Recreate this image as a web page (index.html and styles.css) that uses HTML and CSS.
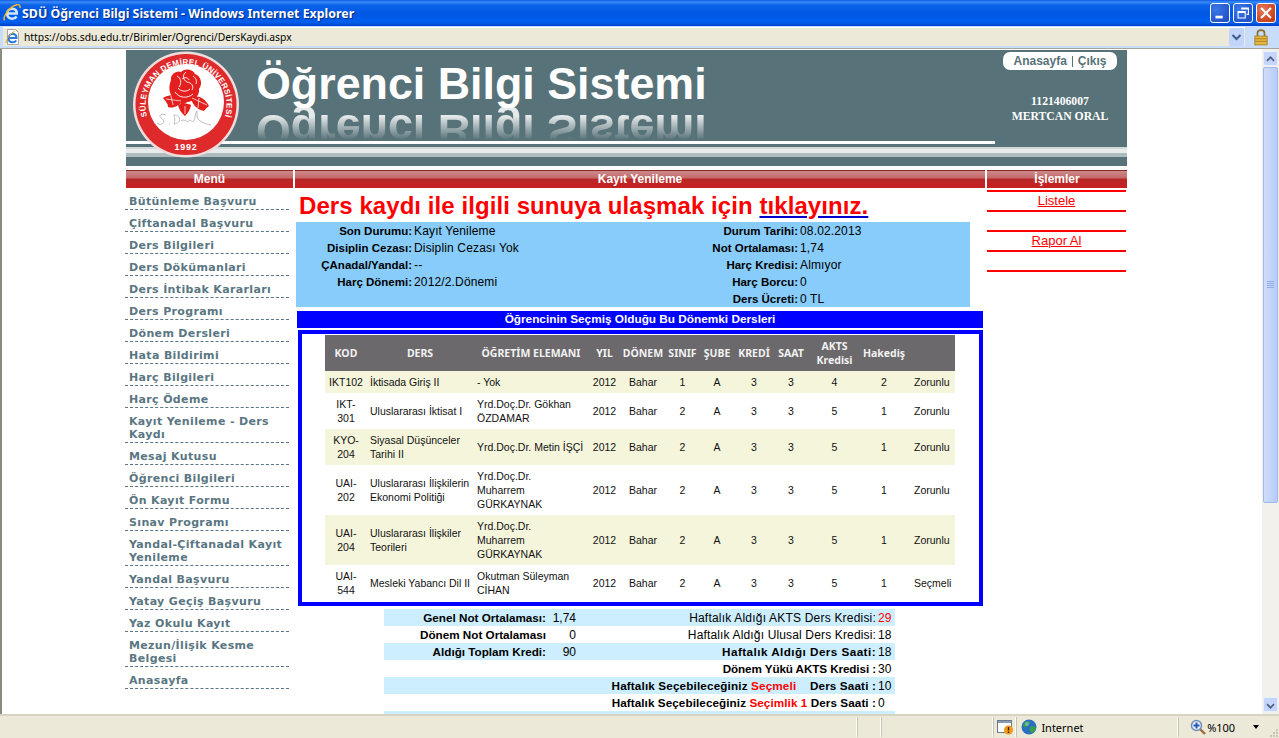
FILE: index.html
```html
<!DOCTYPE html>
<html lang="tr">
<head>
<meta charset="utf-8">
<title>SDÜ Öğrenci Bilgi Sistemi</title>
<link rel="stylesheet" href="styles.css">
</head>
<body>
<div class="window">
  <header class="titlebar">
    <svg class="ie-big" viewBox="0 0 18 18" width="18" height="18"><path d="M4.500 9.500h9.300c.2-3-1.800-4.800-4.500-4.800-3 0-5.200 2.200-5.200 5s2.200 5 5.200 5c2 0 3.400-.8 4.300-2.200" fill="none" stroke="#cfe6ff" stroke-width="2.600"/><path d="M1.500 16.500C-.5 13 6 3 13 1c3-1 4.500 0 4 3" fill="none" stroke="#f0b428" stroke-width="1.500"/></svg>
    <span class="title-text">SDÜ Öğrenci Bilgi Sistemi - Windows Internet Explorer</span>
    <span class="win-btns">
      <span class="win-btn"><svg viewBox="0 0 20 20" width="18" height="18"><rect x="5" y="13" width="8" height="3" fill="#fff"/></svg></span>
      <span class="win-btn"><svg viewBox="0 0 20 20" width="18" height="18"><path d="M8 4.500h8v7h-2M4.500 8.500h8v7h-8z M4.500 9.500h8M8 5.500h8" fill="none" stroke="#fff" stroke-width="1.200"/></svg></span>
      <span class="win-btn win-close"><svg viewBox="0 0 20 20" width="18" height="18"><path d="M4.500 4.500l11 11M15.500 4.500l-11 11" stroke="#fff" stroke-width="2.400"/></svg></span>
    </span>
  </header>

  <div class="addressbar">
    <div class="address-field">
      <svg class="page-icon" viewBox="0 0 16 16" width="16" height="16"><path d="M2.500 .5h8l3 3v12h-11z" fill="#fff" stroke="#a8a8a8"/><path d="M3.500 9h8c0-2.500-1.500-4-3.800-4C5.200 5 3.500 7 3.500 9.300s1.700 4 4.200 4c1.600 0 2.800-.6 3.500-1.800" fill="none" stroke="#2a7ad8" stroke-width="2"/><path d="M1 14C1 11 5 4 10 2.500" fill="none" stroke="#e8a820"/></svg>
      <span class="url">https://obs.sdu.edu.tr/Birimler/Ogrenci/DersKaydi.aspx</span>
      <span class="url-drop"><svg viewBox="0 0 15 18" width="15" height="18"><path d="M3.500 7l4 4 4-4" fill="none" stroke="#3c5a8c" stroke-width="2"/></svg></span>
    </div>
    <div class="lock">
      <svg viewBox="0 0 16 20" width="14" height="18"><path d="M4 9V5.500C4 1 12 1 12 5.500V9" fill="none" stroke="#8c7026" stroke-width="2"/><rect x="1" y="9" width="14" height="10" fill="#e8b63c" stroke="#a07e20"/><path d="M1 12h14M1 15h14" stroke="#a07e20"/></svg>
    </div>
  </div>

  <div class="viewport">
    <main class="page">
      <section class="banner">
        <svg class="logo" viewBox="0 0 108 110" width="108" height="110">
          <circle cx="53" cy="54.500" r="53" fill="#f0dcdc"/>
          <circle cx="53" cy="54.500" r="50.500" fill="#df2a2c"/>
          <circle cx="53" cy="52" r="38" fill="#fff"/>
          <defs><path id="arc-top" d="M14 66A40.500 40.500 0 1 1 92 66"/></defs>
          <text class="logo-ring"><textPath href="#arc-top" startOffset="50%" text-anchor="middle" textLength="150" lengthAdjust="spacing">SÜLEYMAN DEMİREL ÜNİVERSİTESİ</textPath></text>
          <text class="logo-year" x="53" y="100" text-anchor="middle">1992</text>
          <path d="M38 30C37 24 44 20 48 22 52 18 60 19 62 24 68 26 70 34 66 39 67 46 60 52 54 52 50 56 46 54 44 50 38 48 34 40 38 30Z" fill="#e3201e"/>
          <path d="M44 26c4 2 5 7 2 11M53 22c-4 3-3 8 1 10 5 1 7 4 5 8M49 29c2-2 6-2 7 1M45 38c3 4 9 4 12 1M42 42c4 6 12 7 18 2M60 26c3 2 4 5 3 8" fill="none" stroke="#fff" stroke-width=".9"/>
          <path d="M30 48C36 44 44 44 50 50 46 56 40 59 35 57 35 53 32 51 30 48ZM76 56C72 48 66 45 58 47 58 53 64 60 71 61 72 59 74 58 76 56ZM45 55C49 53 54 53 58 55 57 60 55 63 52 66 48 63 46 59 45 55Z" fill="#e3201e"/>
          <path d="M33 49l15 2M74 55l-15-7M52 56v8M38 46l2 9M66 48l-1 10" stroke="#fff" stroke-width=".7"/>
          <path d="M33 65c-4-2-8 0-5 3 3 2 4 4 1 6-2 1-4 0-5-1M36 74h1M41 65c1 4 1 7 0 9M41 65c7 0 8 8 0 9M48 71c3-3 5 2 8 0 2-2 3 2 5 0 1-3 1-7 3-10 0 5 0 8 2 9 2 2 7 4 12 5" fill="none" stroke="#aeaeae" stroke-width=".8"/>
        </svg>
        <div class="banner-top">
          <h1 class="brand">Öğrenci Bilgi Sistemi</h1>
          <div class="brand-mirror" aria-hidden="true">Öğrenci Bilgi Sistemi</div>
          <div class="account">
            <nav class="top-links"><a>Anasayfa</a><i></i><a>Çıkış</a></nav>
            <p class="student">1121406007<br>MERTCAN ORAL</p>
          </div>
        </div>
        <div class="rule"></div>
        <div class="stripes"></div>
      </section>

      <div class="columns">
        <aside class="col">
          <h2 class="bar">Menü</h2>
          <nav class="menu">
            <a>Bütünleme Başvuru</a>
            <a>Çiftanadal Başvuru</a>
            <a>Ders Bilgileri</a>
            <a>Ders Dökümanlari</a>
            <a>Ders İntibak Kararları</a>
            <a>Ders Programı</a>
            <a>Dönem Dersleri</a>
            <a>Hata Bildirimi</a>
            <a>Harç Bilgileri</a>
            <a>Harç Ödeme</a>
            <a>Kayıt Yenileme - Ders Kaydı</a>
            <a>Mesaj Kutusu</a>
            <a>Öğrenci Bilgileri</a>
            <a>Ön Kayıt Formu</a>
            <a>Sınav Programı</a>
            <a>Yandal-Çiftanadal Kayıt Yenileme</a>
            <a>Yandal Başvuru</a>
            <a>Yatay Geçiş Başvuru</a>
            <a>Yaz Okulu Kayıt</a>
            <a>Mezun/İlişik Kesme Belgesi</a>
            <a>Anasayfa</a>
          </nav>
        </aside>

        <div class="col">
          <h2 class="bar">Kayıt Yenileme</h2>
          <p class="notice">Ders kaydı ile ilgili sunuya ulaşmak için <a>tıklayınız.</a></p>
          <div class="info">
            <b>Son Durumu:</b><span>Kayıt Yenileme</span><b>Durum Tarihi:</b><span>08.02.2013</span>
            <b>Disiplin Cezası:</b><span>Disiplin Cezası Yok</span><b>Not Ortalaması:</b><span>1,74</span>
            <b>ÇAnadal/Yandal:</b><span>--</span><b>Harç Kredisi:</b><span>Almıyor</span>
            <b>Harç Dönemi:</b><span>2012/2.Dönemi</span><b>Harç Borcu:</b><span>0</span>
            <b></b><span></span><b>Ders Ücreti:</b><span>0 TL</span>
          </div>
          <h3 class="blue-title">Öğrencinin Seçmiş Olduğu Bu Dönemki Dersleri</h3>
          <div class="courses-box">
            <table class="courses">
              <colgroup>
                <col class="c-kod"><col class="c-ders"><col class="c-ogr"><col class="c-yil"><col class="c-don"><col class="c-sin"><col class="c-sub"><col class="c-kre"><col class="c-saa"><col class="c-akt"><col class="c-hak"><col class="c-tur">
              </colgroup>
              <thead>
                <tr><th>KOD</th><th>DERS</th><th>ÖĞRETİM ELEMANI</th><th>YIL</th><th>DÖNEM</th><th>SINIF</th><th>ŞUBE</th><th>KREDİ</th><th>SAAT</th><th>AKTS Kredisi</th><th>Hakediş</th><th></th></tr>
              </thead>
              <tbody>
                <tr class="alt"><td>IKT102</td><td class="l">İktisada Giriş II</td><td class="l">- Yok</td><td>2012</td><td>Bahar</td><td>1</td><td>A</td><td>3</td><td>3</td><td>4</td><td>2</td><td class="l">Zorunlu</td></tr>
                <tr><td>IKT-301</td><td class="l">Uluslararası İktisat I</td><td class="l">Yrd.Doç.Dr. Gökhan ÖZDAMAR</td><td>2012</td><td>Bahar</td><td>2</td><td>A</td><td>3</td><td>3</td><td>5</td><td>1</td><td class="l">Zorunlu</td></tr>
                <tr class="alt"><td>KYO-204</td><td class="l">Siyasal Düşünceler Tarihi II</td><td class="l">Yrd.Doç.Dr. Metin İŞÇİ</td><td>2012</td><td>Bahar</td><td>2</td><td>A</td><td>3</td><td>3</td><td>5</td><td>1</td><td class="l">Zorunlu</td></tr>
                <tr><td>UAI-202</td><td class="l">Uluslararası İlişkilerin Ekonomi Politiği</td><td class="l">Yrd.Doç.Dr.<br>Muharrem<br>GÜRKAYNAK</td><td>2012</td><td>Bahar</td><td>2</td><td>A</td><td>3</td><td>3</td><td>5</td><td>1</td><td class="l">Zorunlu</td></tr>
                <tr class="alt"><td>UAI-204</td><td class="l">Uluslararası İlişkiler Teorileri</td><td class="l">Yrd.Doç.Dr.<br>Muharrem<br>GÜRKAYNAK</td><td>2012</td><td>Bahar</td><td>2</td><td>A</td><td>3</td><td>3</td><td>5</td><td>1</td><td class="l">Zorunlu</td></tr>
                <tr><td>UAI-544</td><td class="l">Mesleki Yabancı Dil II</td><td class="l">Okutman Süleyman CİHAN</td><td>2012</td><td>Bahar</td><td>2</td><td>A</td><td>3</td><td>3</td><td>5</td><td>1</td><td class="l">Seçmeli</td></tr>
              </tbody>
            </table>
          </div>
          <div class="summary">
            <div class="sum-row tint"><b>Genel Not Ortalaması:</b><span class="num">1,74</span><span class="lab sp-a">Haftalık Aldığı AKTS Ders Kredisi:</span><span class="val red">29</span></div>
            <div class="sum-row"><b>Dönem Not Ortalaması</b><span class="num">0</span><span class="lab sp-b">Haftalık Aldığı Ulusal Ders Kredisi:</span><span class="val">18</span></div>
            <div class="sum-row tint"><b>Aldığı Toplam Kredi:</b><span class="num">90</span><b class="lab sp-c">Haftalık Aldığı Ders Saati:</b><span class="val">18</span></div>
            <div class="sum-row"><b></b><span class="num"></span><b class="lab sp-d">Dönem Yükü AKTS Kredisi :</b><span class="val">30</span></div>
            <div class="sum-row tint"><b></b><span class="num"></span><b class="lab sp-f">Haftalık Seçebileceğiniz <em>Seçmeli</em>&nbsp;&nbsp;&nbsp; Ders Saati :</b><span class="val">10</span></div>
            <div class="sum-row"><b></b><span class="num"></span><b class="lab sp-e">Haftalık Seçebileceğiniz <em>Seçimlik 1</em> Ders Saati :</b><span class="val">0</span></div>
            <div class="sum-row tint"><b></b><span class="num"></span><b class="lab"></b><span class="val"></span></div>
          </div>
        </div>

        <aside class="col">
          <h2 class="bar">İşlemler</h2>
          <div class="actions">
            <a>Listele</a>
            <span></span>
            <a>Rapor Al</a>
            <span></span>
          </div>
        </aside>
      </div>
    </main>

    <div class="scrollbar">
      <span class="sb-btn"><svg viewBox="0 0 15 15" width="15" height="15"><path d="M3.500 9l4-4 4 4" fill="none" stroke="#4d6185" stroke-width="2"/></svg></span>
      <span class="sb-thumb"><svg viewBox="0 0 7 8" width="7" height="8"><path d="M0 .5h7M0 2.500h7M0 4.500h7M0 6.500h7" stroke="#8fb0e8"/></svg></span>
      <span class="sb-track"></span>
      <span class="sb-btn"><svg viewBox="0 0 15 15" width="15" height="15"><path d="M3.500 6l4 4 4-4" fill="none" stroke="#4d6185" stroke-width="2"/></svg></span>
    </div>
  </div>

  <footer class="statusbar">
    <span class="st st-wide"></span>
    <span class="st st-a"></span>
    <span class="st st-b"></span>
    <span class="st st-warn"><svg viewBox="0 0 17 16" width="17" height="16"><rect x=".5" y="1.500" width="14" height="12" fill="#fff" stroke="#6a7a90"/><path d="M1 3h13" stroke="#8a9ab0" stroke-width="2"/><circle cx="11.500" cy="11" r="4.500" fill="#f09a1c"/><path d="M11.500 8v3.500M11.500 12.500v1.500" stroke="#402000" stroke-width="1.400"/></svg></span>
    <span class="st st-zone"><svg viewBox="0 0 16 16" width="16" height="16"><circle cx="8" cy="8" r="7.500" fill="#2a6fc0"/><path d="M3 4c2-2 5-2 6-1 0 2-2 2-3 4-1 2-3 1-4 0zM9 8c2-1 5-1 6 1-1 3-3 5-5 5-1-2-2-4-1-6z" fill="#38a048"/><circle cx="6" cy="5" r="2" fill="#a8d0f0" opacity=".5"/></svg>Internet</span>
    <span class="st st-zoom"><svg viewBox="0 0 16 16" width="16" height="16"><path d="M10 10l5 5" stroke="#a06a3c" stroke-width="2.400"/><circle cx="6.500" cy="6.500" r="5" fill="#e8f0fa" stroke="#6f8db5" stroke-width="1.500"/><path d="M6.500 3.500v6M3.500 6.500h6" stroke="#2858b8" stroke-width="2"/></svg>%100<i class="zoom-arrow"></i></span>
    <span class="grip"><svg viewBox="0 0 11 11" width="11" height="11"><path d="M8 2h2v2H8zM5 5h2v2H5zM8 5h2v2H8zM2 8h2v2H2zM5 8h2v2H5zM8 8h2v2H8z" fill="#c8c4b0"/></svg></span>
  </footer>
</div>
</body>
</html>
```
FILE: styles.css
```css
* { box-sizing: border-box; }
html, body { margin: 0; padding: 0; height: 100%; overflow: hidden; }
body { font-family: "Liberation Sans", Arial, sans-serif; font-size: 12px; color: #000; background: #fff; }
h1, h2, h3, p { margin: 0; }

.window { width: 1279px; height: 738px; display: flex; flex-direction: column; }

/* title bar */
.titlebar {
  height: 26px; flex: none; display: flex; align-items: center; padding-left: 3px;
  background: linear-gradient(#0a5ae0 0, #3c8cf8 2px, #0a62e8 5px, #0057e4 14px, #0060ee 22px, #0040c8 26px);
}
.ie-big { flex: none; }
.title-text {
  margin-left: 1px; color: #fff; font: bold 12.400px "Noto Sans", sans-serif; text-shadow: 1px 1px 1px #0a2a80;
  white-space: nowrap;
}
.win-btns { margin-left: auto; display: flex; gap: 3px; padding-right: 3px; }
.win-btn {
  width: 20px; height: 20px; border: 1px solid #fff; border-radius: 3px; display: flex; align-items: center; justify-content: center;
  background: radial-gradient(circle at 30% 30%, #3a78e8, #2452c8 80%);
}
.win-close { background: radial-gradient(circle at 30% 30%, #e87858, #c83c18 80%); }

/* address bar */
.addressbar {
  height: 23px; flex: none; display: flex; padding: 1px 3px 2px 3px;
  background: #c8dcfc; border-bottom: 1px solid #a8a498;
}
.address-field {
  flex: 1; display: flex; align-items: center; background: #ece9d8; border-top: 1px solid #fff; padding-left: 2px; min-width: 0;
}
.page-icon { flex: none; }
.url { margin-left: 3px; font: 10.300px "Noto Sans", sans-serif; color: #000; }
.url-drop {
  margin-left: auto; margin-right: 1px; width: 15px; height: 18px; background: #c2d4f8; border-radius: 2px; display: flex; align-items: center;
}
.lock { width: 31px; flex: none; display: flex; align-items: center; justify-content: center; }

/* viewport */
.viewport { flex: 1; min-height: 0; display: flex; border-left: 2px solid #8a8a80; overflow: hidden; }
.page { flex: 1; min-width: 0; overflow: hidden; padding: 1px 0 0 124px; background: #fff; }

/* banner */
.banner { position: relative; width: 1001px; height: 116px; background: #577278; display: flex; flex-direction: column; }
.logo { position: absolute; left: 7px; top: 0; z-index: 2; }
.logo-ring { font: bold 8px "Liberation Sans", sans-serif; fill: #fff; }
.logo-year { font: bold 9px "Liberation Sans", sans-serif; fill: #fff; letter-spacing: .8px; }
.banner-top { position: relative; height: 91px; flex: none; display: flex; justify-content: space-between; padding-left: 130px; }
.brand { color: #fff; font: bold 44.800px/40px "Liberation Sans", sans-serif; padding-top: 13px; white-space: nowrap; }
.brand-mirror {
  position: absolute; left: 130px; top: 55px; height: 46px; padding-bottom: 6px; color: #fff; font: bold 44.800px/40px "Liberation Sans", sans-serif; white-space: nowrap;
  transform: scaleY(-1);
  -webkit-mask-image: linear-gradient(to top, rgba(0,0,0,.85) 11px, rgba(0,0,0,0) 35px);
  mask-image: linear-gradient(to top, rgba(0,0,0,.85) 11px, rgba(0,0,0,0) 35px);
}
.account { width: 131px; padding: 2px 3px 0 0; display: flex; flex-direction: column; align-items: center; flex: none; }
.top-links {
  width: 114px; height: 18px; background: #fff; border-radius: 7px; display: flex; align-items: center; justify-content: center;
  color: #577278; font: bold 12px "Liberation Sans", sans-serif;
}
.top-links i { width: 1px; height: 11px; background: #577278; margin: 0 5px; }
.student { margin-top: 24px; color: #fff; font: bold 11.700px/15px "Liberation Serif", serif; text-align: center; }
.rule { height: 3px; width: 869px; background: #fff; flex: none; }
.stripes { margin-top: 3px; height: 10px; flex: none; background: linear-gradient(#d0d8d8 0, #d0d8d8 2px, #e8ecec 2px, #e8ecec 6px, #aebcbe 6px); }

/* columns */
.columns { display: grid; grid-template-columns: 167px 690px 140px; column-gap: 2px; margin-top: 4px; width: 1001px; }
.col { min-width: 0; }
.bar {
  height: 18px; color: #fff; font: bold 12px/18px "Liberation Sans", sans-serif; text-align: center;
  background: linear-gradient(#8c2a2a 0, #8c2a2a 1px, #cc8a8a 1px, #c46a6a 8px, #b82828 9px, #c82020 100%);
}

/* menu */
.menu { margin-left: -1px; width: 164px; display: flex; flex-direction: column; }
.menu a {
  display: block; padding: 7px 3px 1px 4px; color: #5a7682; font: bold 11px/13px "DejaVu Sans", sans-serif;
  border-bottom: 1px dashed #5a7682; letter-spacing: .35px;
}

/* notice */
.notice { height: 34px; padding: 4px 0 0 4px; color: #f00; font: bold 24px/28px "Liberation Sans", sans-serif; letter-spacing: .07px; white-space: nowrap; }
.notice a { color: #f00; text-decoration: underline; text-decoration-color: #00c; }

/* info */
.info {
  margin-left: 1px; width: 674px; height: 85px; padding-top: 1px; background: #87ccfa;
  display: grid; grid-template-columns: 116px 188px 198px 172px; grid-auto-rows: 17px; line-height: 17px; align-items: baseline;
}
.info b { text-align: right; font-size: 11.500px; }
.info span { padding-left: 2px; letter-spacing: .15px; }

.blue-title {
  margin: 4px 0 0 2px; width: 686px; height: 17px; background: #00f; color: #fff; font: bold 11.800px/17px "Liberation Sans", sans-serif; text-align: center;
}
.courses-box { margin: 2px 0 0 3px; width: 685px; border: 4px solid #00f; padding: 1px 0 1px 23px; background: #fff; }

/* table */
.courses { width: 630px; table-layout: fixed; border-collapse: collapse; font-size: 10.500px; line-height: 14px; }
.c-kod { width: 42px; } .c-ders { width: 106px; } .c-ogr { width: 116px; } .c-yil { width: 31px; }
.c-don { width: 46px; } .c-sin { width: 33px; } .c-sub { width: 36px; } .c-kre { width: 38px; }
.c-saa { width: 36px; } .c-akt { width: 51px; } .c-hak { width: 48px; } .c-tur { width: 47px; }
.courses th {
  height: 36px; padding: 0 1px; background: #6b696b; color: #f2f2f2; font: bold 10.500px/14px "Noto Sans", sans-serif; text-align: center;
}
.courses td { padding: 4px; text-align: center; color: #111; }
.courses td.l { text-align: left; }
.courses td:nth-child(2) { padding: 4px 2px 4px 3px; }
.courses td:nth-child(3) { padding: 4px 3px 4px 4px; }
.courses td:nth-child(n+4) { padding: 4px 0; }
.courses td:last-child { padding-left: 6px; }
.alt td { background: #f5f5dc; }

/* summary */
.summary { margin: 3px 0 0 89px; width: 511px; display: flex; flex-direction: column; }
.sum-row { height: 17px; line-height: 17px; display: grid; grid-template-columns: 162px 30px 300px 19px; white-space: nowrap; align-items: baseline; }
.tint { background: #cceeff; }
.sum-row b { font-size: 11.700px; }
.sum-row b, .sum-row .lab { text-align: right; }
.sum-row .num { text-align: right; }
.sum-row .val { padding-left: 2px; }
.sum-row em { color: #f00; font-style: normal; }
.sp-a { letter-spacing: .2px; }
.sp-b { letter-spacing: .15px; }
.sp-c { letter-spacing: .45px; }
.sp-d { letter-spacing: -.1px; }
.sp-e { letter-spacing: .08px; }
.sp-f { letter-spacing: .15px; }
.red { color: #f00; }

/* actions */
.actions { margin-top: 2px; display: flex; flex-direction: column; width: 139px; border-top: 2px solid #f00; }
.actions a { height: 20px; text-align: center; color: #f00; text-decoration: underline; font-size: 13px; line-height: 18px; border-bottom: 2px solid #f00; }
.actions span { height: 20px; border-bottom: 2px solid #f00; }

/* scrollbar */
.scrollbar { width: 17px; flex: none; display: flex; flex-direction: column; padding: 2px 1px 2px 1px; background: #f3f1ec; gap: 1px; }
.sb-btn { height: 15px; flex: none; background: #c6d6fa; border: 1px solid #e8eefc; border-radius: 2px; display: flex; }
.sb-thumb {
  height: 436px; flex: none; background: linear-gradient(to right, #d0dcfa, #b8ccf8); border: 1px solid #9cb8ec; border-radius: 2px;
  display: flex; align-items: center; justify-content: center;
}
.sb-track { flex: 1; }

/* status bar */
.statusbar {
  height: 24px; flex: none; display: flex; align-items: center; background: #ece9d8; border-top: 2px solid #d8d4c4; font: 11px "Noto Sans", sans-serif; color: #000;
}
.st { height: 20px; display: flex; align-items: center; border-right: 1px solid #fff; box-shadow: 1px 0 0 #c8c4b4; }
.st-wide { width: 858px; }
.st-a { width: 24px; }
.st-b { width: 113px; }
.st-warn { width: 23px; padding-left: 4px; }
.st-zone { width: 162px; padding-left: 5px; gap: 4px; }
.st-zoom { width: 90px; padding-left: 12px; gap: 1px; border: 0; box-shadow: none; }
.zoom-arrow { margin-left: 17px; border: 3px solid transparent; border-top: 4px solid #000; border-bottom: 0; }
.grip { margin-left: auto; display: flex; align-self: flex-end; }
```
